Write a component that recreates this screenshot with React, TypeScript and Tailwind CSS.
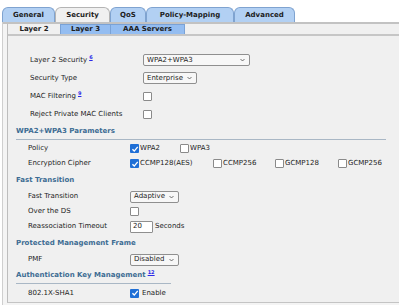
const Box = ({ checked }: { checked?: boolean }) =>
  checked ? (
    <span className="w-[9px] h-[9px] shrink-0 rounded-[1px] bg-[#1f6fd6] flex items-center justify-center">
      <svg viewBox="0 0 10 10" className="w-[8px] h-[8px]">
        <path d="M1.8 5.2 L4.1 7.6 L8.4 2.4" stroke="white" strokeWidth="1.7" fill="none" />
      </svg>
    </span>
  ) : (
    <span className="w-[9px] h-[9px] shrink-0 rounded-[1px] bg-white border border-[#8a8a8a]" />
  );

const Select = ({ value, w }: { value: string; w: string }) => (
  <div className={`${w} shrink-0 h-[12px] border border-[#8f8f8f] rounded-[2px] bg-[#f7f7f7] flex items-center justify-between pl-[3px] pr-[4px]`}>
    <span>{value}</span>
    <svg viewBox="0 0 6 4" className="w-[5px] h-[4px]">
      <path d="M0.6 0.8 L3 3.2 L5.4 0.8" stroke="#444" strokeWidth="0.9" fill="none" />
    </svg>
  </div>
);

const Sup = ({ n }: { n: string }) => (
  <span className="ml-[2px] text-[5px] font-bold text-[#2a2ae8] underline relative -top-[2px]">{n}</span>
);

const Opt = ({ checked, label, w }: { checked?: boolean; label: string; w: string }) => (
  <div className={`${w} shrink-0 flex items-center gap-[1px]`}>
    <Box checked={checked} />
    <span>{label}</span>
  </div>
);

const Row1 = ({ label, sup, children }: { label: string; sup?: string; children: React.ReactNode }) => (
  <div className="h-[18px] flex items-center pl-[22px]">
    <div className="w-[113px] shrink-0 flex items-center">
      <span>{label}</span>
      {sup && <Sup n={sup} />}
    </div>
    {children}
  </div>
);

const Row2 = ({ label, h = 'h-[15px]', children }: { label: string; h?: string; children: React.ReactNode }) => (
  <div className={`${h} flex items-center pl-[20px]`}>
    <div className="w-[102px] shrink-0">{label}</div>
    {children}
  </div>
);

const Header = ({ title, h, line, sup }: { title: string; h: string; line?: string; sup?: string }) => (
  <div className={`${h} pl-[8px]`}>
    <div className={`h-full flex items-center font-bold text-[#3d6c93] ${line ?? ''}`}>
      <span>{title}</span>
      {sup && <Sup n={sup} />}
    </div>
  </div>
);

export default function App() {
  const tabs = ['General', 'Security', 'QoS', 'Policy-Mapping', 'Advanced'];
  const widths = ['w-[53px]', 'w-[55px]', 'w-[36px]', 'w-[88px]', 'w-[61px]'];
  return (
    <div className="w-[399px] h-[305px] overflow-hidden bg-white font-['DejaVu_Sans',sans-serif] text-[7px] text-[#1c1c1c]">
      <div className="h-[22px] flex items-end pl-[2px]">
        {tabs.map((t, i) => (
          <div
            key={t}
            className={`${widths[i]} h-[15px] flex items-center justify-center font-bold rounded-t-[6px] border border-b-0 ${
              t === 'Security' ? 'bg-[#f0f0f0] border-[#b4b4b4]' : 'bg-[#b2d0f3] border-[#7fa3d0]'
            }`}
          >
            {t}
          </div>
        ))}
      </div>
      <div className="ml-[2px] h-[283px] border-l border-[#cfcfcf] bg-[#f4f4f4]">
        <div className="border-t-2 border-[#c2c2c2]" />
        <div className="ml-[4px] h-[279px] border-l border-[#bdbdbd] border-b border-b-[#c4c4c4] bg-[#f0f0f0]">
          <div className="h-[12px] flex items-end border-b-2 border-[#c6c6c6]">
            <div className="w-[52px] h-[10px] flex items-center justify-center font-bold">Layer 2</div>
            <div className="w-[51px] h-[10px] flex items-center justify-center font-bold bg-[#94bdf1] border border-b-0 border-[#7aa2d6]">Layer 3</div>
            <div className="w-[74px] h-[10px] flex items-center justify-center font-bold bg-[#94bdf1] border border-b-0 border-l-0 border-[#7aa2d6]">AAA Servers</div>
          </div>
          <div className="h-[15px]" />
          <Row1 label="Layer 2 Security" sup="6">
            <Select value="WPA2+WPA3" w="w-[107px]" />
          </Row1>
          <Row1 label="Security Type">
            <Select value="Enterprise" w="w-[54px]" />
          </Row1>
          <Row1 label="MAC Filtering" sup="9">
            <Box />
          </Row1>
          <Row1 label="Reject Private MAC Clients">
            <Box />
          </Row1>
          <Header title="WPA2+WPA3 Parameters" h="h-[17px]" line="border-b border-[#a9b7c5] w-[370px]" />
          <div className="h-[1px]" />
          <Row2 label="Policy">
            <Opt checked label="WPA2" w="w-[50px]" />
            <Opt label="WPA3" w="w-[50px]" />
          </Row2>
          <Row2 label="Encryption Cipher">
            <Opt checked label="CCMP128(AES)" w="w-[83px]" />
            <Opt label="CCMP256" w="w-[62px]" />
            <Opt label="GCMP128" w="w-[63px]" />
            <Opt label="GCMP256" w="w-[60px]" />
          </Row2>
          <Header title="Fast Transition" h="h-[18px]" />
          <Row2 label="Fast Transition">
            <Select value="Adaptive" w="w-[49px]" />
          </Row2>
          <Row2 label="Over the DS">
            <Box />
          </Row2>
          <Row2 label="Reassociation Timeout">
            <div className="w-[23px] h-[12px] bg-white border border-[#8f8f8f] rounded-[1px] flex items-center pl-[2px]">20</div>
            <span className="ml-[2px]">Seconds</span>
          </Row2>
          <Header title="Protected Management Frame" h="h-[18px]" />
          <Row2 label="PMF">
            <Select value="Disabled" w="w-[49px]" />
          </Row2>
          <Header title="Authentication Key Management" h="h-[17px]" sup="12" line="border-b border-[#a9b7c5] w-[155px]" />
          <Row2 label="802.1X-SHA1" h="h-[18px]">
            <Box checked />
            <span className="ml-[3px]">Enable</span>
          </Row2>
        </div>
      </div>
    </div>
  );
}
